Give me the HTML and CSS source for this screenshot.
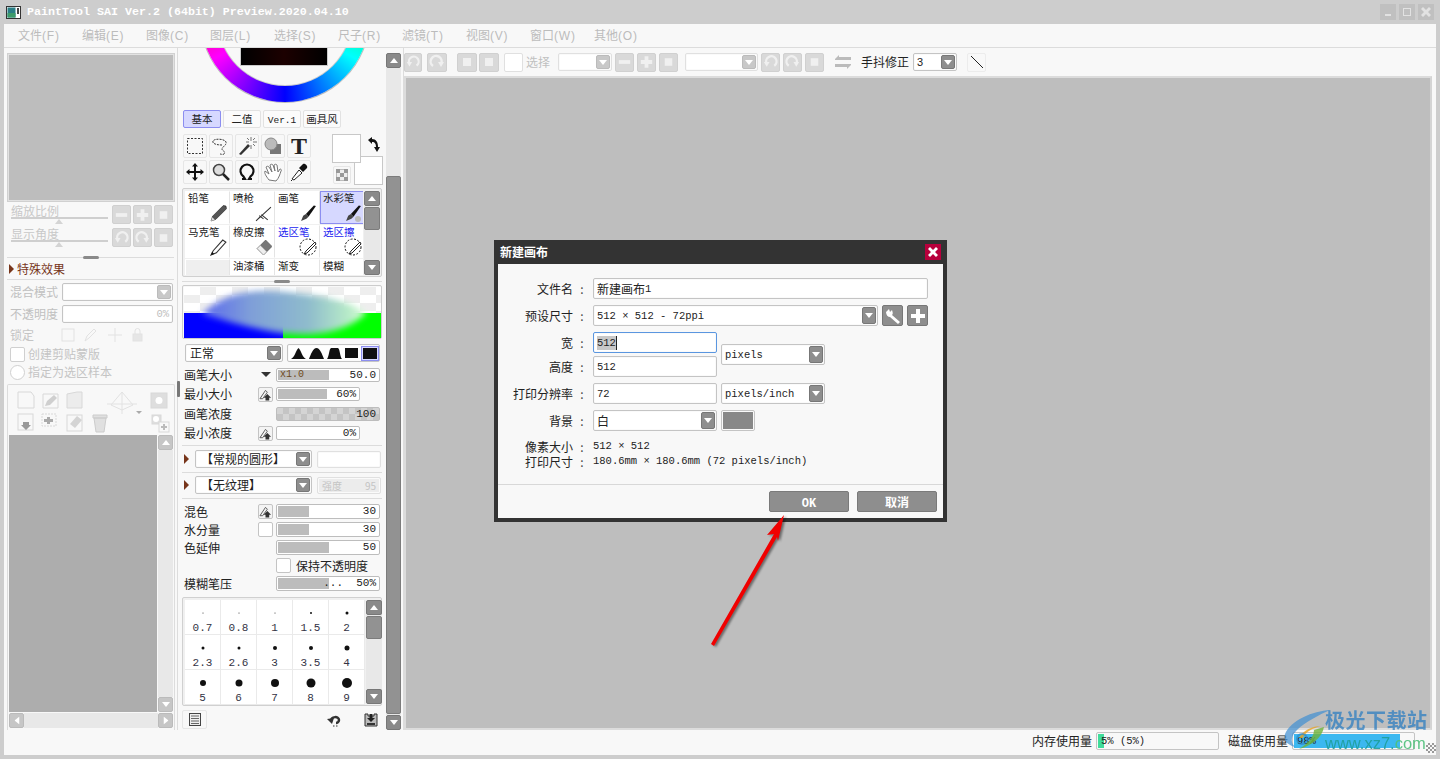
FILE: index.html
```html
<!DOCTYPE html>
<html lang="zh-CN">
<head>
    <meta charset="UTF-8">
    <title>PaintTool SAI Ver.2</title>
    <link rel="stylesheet" href="styles.css">
</head>
<body>
<svg class="defs" width="0" height="0">
    <symbol id="pen" viewBox="0 0 16 16"><path d="M15 1 L12.5 0.5 L2.5 10.5 L1 15 L5.5 13.5 L15.5 3.5 Z" fill="#555" stroke="#222" stroke-width=".6"/><path d="M1 15 L2.2 11.5 L4.5 13.8 Z" fill="#ddd"/></symbol>
    <symbol id="brush" viewBox="0 0 16 16"><path d="M15 1 L13 0.5 L5.5 8.5 L8 11 Z" fill="#111"/><path d="M5.5 8.5 L3 10 L1 15 L6 13 L8 11 Z" fill="#444"/></symbol>
    <symbol id="eraser" viewBox="0 0 16 16"><path d="M10 1 L16 7 L8 15 L2 9 Z" fill="#777" stroke="#555" stroke-width=".6"/><path d="M2 9 L5 6 L11 12 L8 15 Z" fill="#eee" stroke="#aaa" stroke-width=".6"/></symbol>
    <symbol id="sel" viewBox="0 0 18 18"><circle cx="9" cy="9" r="8" fill="#fff" stroke="#111" stroke-dasharray="2 1.5"/><path d="M16 4 L7 13 L5 16 L8 15 L17 6 Z" fill="#fff" stroke="#222"/></symbol>
    <symbol id="tri" viewBox="0 0 8 5"><path d="M0 5 L4 0 L8 5 Z" fill="#fff"/></symbol>
    <symbol id="pressure" viewBox="0 0 14 14"><path d="M1 11 L7 2 L9 4 L4 11 Z" fill="none" stroke="#555"/><path d="M7 13 V10 H5 L9 6 L13 10 H11 V13 Z" fill="#333"/></symbol>
    <symbol id="minus" viewBox="0 0 18 18"><rect x="3" y="7" width="12" height="4" fill="#f0f0f0"/></symbol>
    <symbol id="plus" viewBox="0 0 18 18"><path d="M7 3 H11 V7 H15 V11 H11 V15 H7 V11 H3 V7 H7 Z" fill="#f0f0f0"/></symbol>
    <symbol id="square" viewBox="0 0 18 18"><rect x="5" y="5" width="8" height="8" fill="#f0f0f0"/></symbol>
    <symbol id="turn" viewBox="0 0 18 18"><path d="M13 13 A5.5 5.5 0 1 0 5 11" fill="none" stroke="#f0f0f0" stroke-width="2.5"/><path d="M2 9 H8 L5 14 Z" fill="#f0f0f0"/></symbol>
    <symbol id="turn2" viewBox="0 0 18 18"><path d="M5 13 A5.5 5.5 0 1 1 13 11" fill="none" stroke="#f0f0f0" stroke-width="2.5"/><path d="M10 9 H16 L13 14 Z" fill="#f0f0f0"/></symbol>
    <symbol id="cross" viewBox="0 0 12 12"><path d="M1 3 L3 1 L6 4 L9 1 L11 3 L8 6 L11 9 L9 11 L6 8 L3 11 L1 9 L4 6 Z" fill="currentColor"/></symbol>
</svg>

<div class="titlebar">
    <svg class="app-icon" width="15" height="13" viewBox="0 0 15 13"><rect width="15" height="13" fill="#333"/><rect x="1" y="1" width="13" height="11" fill="#fff"/><rect x="1.500" y="1.500" width="8" height="10" fill="#2a7f86"/><rect x="1.500" y="7" width="8" height="4.500" fill="#3d9b6a"/><rect x="11" y="2" width="2" height="6" fill="#444"/></svg>
    <span class="title-text">PaintTool SAI Ver.2 (64bit) Preview.2020.04.10</span>
    <div class="win-btns">
        <div class="win-btn"><i class="w-min"></i></div>
        <div class="win-btn"><i class="w-max"></i></div>
        <div class="win-btn"><svg width="12" height="12"><use href="#cross"/></svg></div>
    </div>
</div>

<div class="menubar">
    <span class="menu-item">文件<b>(F)</b></span>
    <span class="menu-item">编辑<b>(E)</b></span>
    <span class="menu-item">图像<b>(C)</b></span>
    <span class="menu-item">图层<b>(L)</b></span>
    <span class="menu-item">选择<b>(S)</b></span>
    <span class="menu-item">尺子<b>(R)</b></span>
    <span class="menu-item">滤镜<b>(T)</b></span>
    <span class="menu-item">视图<b>(V)</b></span>
    <span class="menu-item">窗口<b>(W)</b></span>
    <span class="menu-item">其他<b>(O)</b></span>
</div>

<div class="main">
    <!-- left: navigator + layers -->
    <div class="left">
        <div class="navigator"></div>
        <div class="nav-row">
            <div class="nav-slider"><span>缩放比例</span><div class="track"><i></i></div></div>
            <div class="btn-grp">
                <div class="gbtn off"><svg width="18" height="18"><use href="#minus"/></svg></div>
                <div class="gbtn off"><svg width="18" height="18"><use href="#plus"/></svg></div>
                <div class="gbtn off"><svg width="18" height="18"><use href="#square"/></svg></div>
            </div>
        </div>
        <div class="nav-row row-2">
            <div class="nav-slider"><span>显示角度</span><div class="track"><i></i></div></div>
            <div class="btn-grp">
                <div class="gbtn off"><svg width="18" height="18"><use href="#turn"/></svg></div>
                <div class="gbtn off"><svg width="18" height="18"><use href="#turn2"/></svg></div>
                <div class="gbtn off"><svg width="18" height="18"><use href="#square"/></svg></div>
            </div>
        </div>
        <div class="grip-line"><i></i></div>
        <div class="fx-head"><i class="arrow"></i><span>特殊效果</span></div>
        <div class="field-row first">
            <label>混合模式</label>
            <div class="box sel off grow"><em class="drop off"><svg width="8" height="5"><use href="#tri"/></svg></em></div>
        </div>
        <div class="field-row">
            <label>不透明度</label>
            <div class="box grow num">0%</div>
        </div>
        <div class="lock-row">
            <label>锁定</label>
            <svg width="84" height="18" viewBox="0 0 84 18"><g fill="none" stroke="#e2e2e2"><rect x="2" y="3" width="12" height="12"/><path d="M25 15 L27 10 L34 3 L36 5 L29 12 Z"/><path d="M55 2 V16 M48 9 H62"/><rect x="73" y="8" width="9" height="7" fill="#e6e6e6"/><path d="M75 8 V5 A2.500 2.500 0 0 1 80 5 V8"/></g></svg>
        </div>
        <div class="check-row"><i class="check"></i><span>创建剪贴蒙版</span></div>
        <div class="check-row"><i class="check round"></i><span>指定为选区样本</span></div>
        <div class="layers">
            <div class="layer-icons">
                <svg width="166" height="42" viewBox="0 0 166 42">
                    <g fill="#f8f8f8" stroke="#d8d8d8">
                        <path d="M9 1 H22 L25 5 V17 H9 Z"/>
                        <path d="M34 3 H49 V17 H34 Z"/>
                        <path d="M58 3 L68 1 H73 V17 H58 Z" fill="#ececec"/>
                        <rect x="142" y="2" width="16" height="15" fill="#dedede"/>
                        <rect x="9" y="23" width="15" height="16"/>
                        <rect x="33" y="23" width="14" height="12" stroke-dasharray="2 1"/>
                        <rect x="58" y="24" width="15" height="16"/>
                        <rect x="143" y="24" width="9" height="9" fill="#dedede"/>
                        <rect x="150" y="31" width="10" height="10"/>
                    </g>
                    <circle cx="150" cy="9.500" r="3.500" fill="#fff"/>
                    <path d="M36 15 L38 10 L45 4 L48 7 L41 14 Z" fill="#cfcfcf"/>
                    <path d="M113 1 L124 14 L113 19 L102 14 Z M113 1 V23 M98 13 H128" fill="none" stroke="#e2e2e2"/>
                    <path d="M127 20 H133 L130 23 Z" fill="#aaa"/>
                    <path d="M14 31 V34 H12 L17 39 L22 34 H20 V31 Z" fill="#999"/>
                    <path d="M38 26 H41 V28 H44 V31 H41 V33 H38 V31 H35 V28 H38 Z" fill="#aaa"/>
                    <path d="M61 33 L68 25 L73 29 L66 37 Z" fill="#d4d4d4"/>
                    <path d="M84 24 H98 V27 H84 Z M85 27 L87 41 H95 L97 27 Z" fill="#e0e0e0" stroke="#ccc"/>
                    <path d="M154 33 H156 V35 H158 V37 H156 V39 H154 V37 H152 V35 H154 Z" fill="#bbb"/>
                    <circle cx="147" cy="28" r="3" fill="#fff"/>
                </svg>
            </div>
            <div class="layer-list">
                <div class="layer-fill"></div>
                <div class="sb thin">
                    <div class="sb-btn off"><svg width="8" height="5"><use href="#tri"/></svg></div>
                    <div class="sb-track"></div>
                    <div class="sb-btn off down"><svg width="8" height="5"><use href="#tri"/></svg></div>
                </div>
            </div>
            <div class="hscroll">
                <div class="sb-btn off left-b"><svg width="8" height="5"><use href="#tri"/></svg></div>
                <div class="h-track"></div>
                <div class="sb-btn off right-b"><svg width="8" height="5"><use href="#tri"/></svg></div>
            </div>
        </div>
        <i class="side-handle"></i>
    </div>

    <!-- middle: color + brush tools -->
    <div class="mid">
        <div class="wheel-clip">
            <div class="wheel"></div>
            <div class="wheel-inner"></div>
            <div class="wheel-sq"></div>
        </div>
        <div class="tabs">
            <span class="tab on">基本</span>
            <span class="tab">二值</span>
            <span class="tab"><b>Ver.1</b></span>
            <span class="tab">画具风</span>
        </div>
        <div class="tool-area">
            <div class="tools">
                <div class="tool"><svg width="20" height="20"><rect x="2.500" y="2.500" width="15" height="15" fill="none" stroke="#333" stroke-dasharray="2 1.500"/></svg></div>
                <div class="tool"><svg width="20" height="20"><path d="M11 9 C4 9 1 7 2 5 C4 2 14 3 15 6 C16 9 11 11 11 13 C11 15 15 15 13 18 C12 19 10 18 9 18" fill="none" stroke="#333" stroke-dasharray="2 1"/></svg></div>
                <div class="tool"><svg width="20" height="20"><path d="M2 18 L11 8 L13 10 L4 19 Z" fill="#333"/><path d="M14 1 V5 M14 9 V13 M9 6 H12 M16 6 H20 M10 2 L12 4 M18 2 L16 4 M18 10 L16 8" stroke="#777"/></svg></div>
                <div class="tool"><svg width="20" height="20"><rect x="7" y="8" width="11" height="10" fill="#777"/><circle cx="8" cy="8" r="6" fill="#bbb" stroke="#888"/></svg></div>
                <div class="tool t-letter">T</div>
                <div class="tool"><svg width="20" height="20"><path d="M10 1 L13 4.500 H11 V9 H15.500 V7 L19 10 L15.500 13 V11 H11 V15.500 H13 L10 19 L7 15.500 H9 V11 H4.500 V13 L1 10 L4.500 7 V9 H9 V4.500 H7 Z" fill="#111"/></svg></div>
                <div class="tool"><svg width="20" height="20"><circle cx="8" cy="8" r="5.500" fill="#ddd" stroke="#444" stroke-width="1.500"/><path d="M12 12 L18 18" stroke="#222" stroke-width="2.500"/></svg></div>
                <div class="tool"><svg width="20" height="20"><path d="M5 17 H8 L6.500 14.500 A6.500 6.500 0 1 1 13.500 14.500 L12 17 H15" fill="none" stroke="#111" stroke-width="2.200"/></svg></div>
                <div class="tool"><svg width="20" height="20"><path d="M6 18 C3 14 1 11 2 9 L6 12 L3 5 C4 4 5 4 6 5 L9 10 L7 3 C8 2 9 2 10 3 L12 9 L11 3 C12 2 13 2 14 3 L15 10 L17 7 C18 7 19 8 18 9 C17 12 16 16 13 19 Z" fill="#fff" stroke="#777"/></svg></div>
                <div class="tool"><svg width="20" height="20"><path d="M3 18 L2 19 M3 17 L10 8 L13 11 L5 18 Z" fill="#fff" stroke="#222"/><path d="M10 6 L14 2 C16 1 19 4 18 6 L14 10 Z" fill="#111"/></svg></div>
            </div>
            <div class="swatches">
                <div class="swatch fg"></div>
                <div class="swatch bg"></div>
                <svg class="swap" width="14" height="16" viewBox="0 0 14 16"><path d="M1 3 L5 0 V2 C9 2 11 5 11 10 H13 L10 15 L7 10 H9 C9 7 8 5 5 5 V7 Z" fill="#111"/></svg>
                <div class="sw-reset"><svg width="12" height="12"><rect width="12" height="12" fill="#eee" stroke="#888"/><path d="M0 0 H4 V4 H0 Z M8 0 H12 V4 H8 Z M4 4 H8 V8 H4 Z M0 8 H4 V12 H0 Z M8 8 H12 V12 H8 Z" fill="#999"/></svg></div>
            </div>
        </div>
        <div class="brush-box">
            <div class="brush-grid">
                <div class="bcell">铅笔<svg class="bi" width="17" height="17"><use href="#pen"/></svg></div>
                <div class="bcell">喷枪<svg class="bi" width="17" height="17" viewBox="0 0 16 16"><path d="M1 15 L5 11 M4 10 L8 13 M3 13 L15 2 M6 9 L12 14" stroke="#333" fill="none"/></svg></div>
                <div class="bcell">画笔<svg class="bi" width="17" height="17"><use href="#brush"/></svg></div>
                <div class="bcell on">水彩笔<svg class="bi" width="17" height="17"><use href="#brush"/></svg><i class="drip"></i></div>
                <div class="bcell">马克笔<svg class="bi" width="17" height="17" viewBox="0 0 16 16"><path d="M15 3 L12 1 L3 11 L1 15 L6 13 Z" fill="#fff" stroke="#333"/><path d="M1 15 L2 12 L4 14 Z" fill="#111"/></svg></div>
                <div class="bcell">橡皮擦<svg class="bi" width="17" height="17"><use href="#eraser"/></svg></div>
                <div class="bcell blue">选区笔<svg class="bi" width="18" height="18"><use href="#sel"/></svg></div>
                <div class="bcell blue">选区擦<svg class="bi" width="18" height="18"><use href="#sel"/></svg></div>
                <div class="bcell empty"></div>
                <div class="bcell short">油漆桶</div>
                <div class="bcell short">渐变</div>
                <div class="bcell short">模糊</div>
            </div>
            <div class="sb thin2">
                <div class="sb-btn"><svg width="8" height="5"><use href="#tri"/></svg></div>
                <div class="sb-track"><div class="sb-thumb t-small"></div></div>
                <div class="sb-btn down"><svg width="8" height="5"><use href="#tri"/></svg></div>
            </div>
        </div>
        <div class="grip-line mid-grip"><i></i></div>
        <div class="stroke-preview">
            <svg width="197" height="51" viewBox="0 0 197 51">
                <defs>
                    <pattern id="chk" width="32" height="16" patternUnits="userSpaceOnUse"><rect width="32" height="16" fill="#fff"/><rect x="16" width="16" height="8" fill="#eee"/><rect y="8" width="16" height="8" fill="#eee"/></pattern>
                    <linearGradient id="blob" x1="0" x2="1"><stop offset="0" stop-color="#5a68ee"/><stop offset=".3" stop-color="#7f9fd8"/><stop offset=".65" stop-color="#8fbccc"/><stop offset=".9" stop-color="#b8ecc8"/><stop offset="1" stop-color="#e0ffe0"/></linearGradient>
                    <filter id="soft" x="-10%" y="-10%" width="120%" height="120%"><feGaussianBlur stdDeviation="3"/></filter>
                </defs>
                <rect width="197" height="26" fill="url(#chk)"/>
                <rect y="26" width="99" height="25" fill="#0000ff"/>
                <rect x="99" y="26" width="98" height="25" fill="#00ff00"/>
                <path d="M18 27 C38 8 60 3 88 4 C120 6 145 10 165 17 C175 21 180 24 182 26 C170 38 150 47 120 47 C85 47 50 36 18 27 Z" fill="url(#blob)" filter="url(#soft)"/>
            </svg>
        </div>
        <div class="blend-row">
            <div class="box sel blend">正常<em class="drop"><svg width="8" height="5"><use href="#tri"/></svg></em></div>
            <div class="box shapes">
                <svg width="15" height="11" viewBox="0 0 15 11"><path d="M0 11 C4 9 5 2 7.500 0 C10 2 11 9 15 11 Z" fill="#111"/></svg>
                <svg width="15" height="11" viewBox="0 0 15 11"><path d="M0 11 C2 6 4 0 7.500 0 C11 0 13 6 15 11 Z" fill="#111"/></svg>
                <svg width="15" height="11" viewBox="0 0 15 11"><path d="M0 11 C2 9 2 1 4 0 H11 C13 1 13 9 15 11 Z" fill="#111"/></svg>
                <svg width="13" height="10" viewBox="0 0 13 10"><rect width="13" height="10" fill="#111"/></svg>
                <span class="shape-on"><i></i></span>
            </div>
        </div>
        <div class="sliders">
            <div class="s-row">
                <label>画笔大小</label><i class="down-tri"></i>
                <div class="slider wide"><i class="fill f-size"></i><u>x1.0</u><b>50.0</b></div>
            </div>
            <div class="s-row">
                <label>最小大小</label><div class="tick press"><svg width="14" height="14"><use href="#pressure"/></svg></div>
                <div class="slider narrow"><i class="fill" style="width:60%"></i><b>60%</b></div>
            </div>
            <div class="s-row gap-top">
                <label>画笔浓度</label>
                <div class="slider wide checker"><b>100</b></div>
            </div>
            <div class="s-row">
                <label>最小浓度</label><div class="tick press"><svg width="14" height="14"><use href="#pressure"/></svg></div>
                <div class="slider narrow"><b>0%</b></div>
            </div>
        </div>
        <div class="hr hr-a"></div>
        <div class="tex-row">
            <i class="arrow"></i>
            <div class="box sel tex">【常规的圆形】<em class="drop"><svg width="8" height="5"><use href="#tri"/></svg></em></div>
            <div class="box tex-side"></div>
        </div>
        <div class="hr hr-b"></div>
        <div class="tex-row">
            <i class="arrow"></i>
            <div class="box sel tex">【无纹理】<em class="drop"><svg width="8" height="5"><use href="#tri"/></svg></em></div>
            <div class="box tex-side strength"><span>强度</span><span>95</span></div>
        </div>
        <div class="hr hr-c"></div>
        <div class="sliders tight">
            <div class="s-row">
                <label>混色</label><div class="tick press"><svg width="14" height="14"><use href="#pressure"/></svg></div>
                <div class="slider wide"><i class="fill" style="width:30%"></i><b>30</b></div>
            </div>
            <div class="s-row">
                <label>水分量</label><div class="tick"></div>
                <div class="slider wide"><i class="fill" style="width:30%"></i><b>30</b></div>
            </div>
            <div class="s-row">
                <label>色延伸</label>
                <div class="slider wide"><i class="fill" style="width:50%"></i><b>50</b></div>
            </div>
            <div class="s-row keep">
                <div class="tick"></div><span>保持不透明度</span>
            </div>
            <div class="s-row">
                <label>模糊笔压</label>
                <div class="slider wide"><i class="fill" style="width:50%"></i><b>...&nbsp; 50%</b></div>
            </div>
        </div>
        <div class="size-box">
            <div class="size-grid">
                <div class="sz"><i style="width:1px;height:1px"></i><span>0.7</span></div>
                <div class="sz"><i style="width:1px;height:1px"></i><span>0.8</span></div>
                <div class="sz"><i style="width:1px;height:1px"></i><span>1</span></div>
                <div class="sz"><i style="width:2px;height:2px"></i><span>1.5</span></div>
                <div class="sz"><i style="width:3px;height:3px"></i><span>2</span></div>
                <div class="sz"><i style="width:3px;height:3px"></i><span>2.3</span></div>
                <div class="sz"><i style="width:3px;height:3px"></i><span>2.6</span></div>
                <div class="sz"><i style="width:4px;height:4px"></i><span>3</span></div>
                <div class="sz"><i style="width:4px;height:4px"></i><span>3.5</span></div>
                <div class="sz"><i style="width:5px;height:5px"></i><span>4</span></div>
                <div class="sz"><i style="width:6px;height:6px"></i><span>5</span></div>
                <div class="sz"><i style="width:7px;height:7px"></i><span>6</span></div>
                <div class="sz"><i style="width:8px;height:8px"></i><span>7</span></div>
                <div class="sz"><i style="width:9px;height:9px"></i><span>8</span></div>
                <div class="sz"><i style="width:10px;height:10px"></i><span>9</span></div>
            </div>
            <div class="sb thin2">
                <div class="sb-btn"><svg width="8" height="5"><use href="#tri"/></svg></div>
                <div class="sb-track"><div class="sb-thumb t-small"></div></div>
                <div class="sb-btn down"><svg width="8" height="5"><use href="#tri"/></svg></div>
            </div>
        </div>
        <div class="mid-foot">
            <div class="foot-btn"><svg width="12" height="13" viewBox="0 0 12 13"><rect x=".5" y=".5" width="11" height="12" fill="#eee" stroke="#444"/><path d="M2 3 H10 M2 5.500 H10 M2 8 H10 M2 10.500 H10" stroke="#666"/></svg></div>
            <svg class="foot-undo" width="14" height="14" viewBox="0 0 14 14"><path d="M4 8 C4 3 12 3 12 7 C12 9 10 10 9 10" fill="none" stroke="#333" stroke-width="2.500"/><path d="M0 6 L7 5 L5 11 Z" fill="#333"/><path d="M6 13 H7.500 M9 13 H10.500" stroke="#333"/></svg>
            <svg class="foot-save" width="14" height="14" viewBox="0 0 14 14"><path d="M1 1 H4 V3 H10 V1 H13 V13 H1 Z" fill="#bbb" stroke="#333"/><path d="M5.500 1 H8.500 V5 H11 L7 9 L3 5 H5.500 Z" fill="#222"/><rect x="3" y="10" width="8" height="2" fill="#333"/></svg>
        </div>
    </div>

    <div class="sb main-sb">
        <div class="sb-btn"><svg width="8" height="5"><use href="#tri"/></svg></div>
        <div class="sb-track"><div class="sb-thumb t-main"></div></div>
        <div class="sb-btn down"><svg width="8" height="5"><use href="#tri"/></svg></div>
    </div>

    <!-- canvas area -->
    <div class="work">
        <div class="toolbar">
            <div class="gbtn off w18"><svg width="16" height="18"><use href="#turn"/></svg></div>
            <div class="gbtn off w20 ml5"><svg width="18" height="18"><use href="#turn2"/></svg></div>
            <div class="gbtn off w20 ml10"><svg width="18" height="18"><use href="#square"/></svg></div>
            <div class="gbtn off w20 ml2"><svg width="18" height="18"><use href="#square"/></svg></div>
            <div class="tb-check ml5"></div>
            <span class="tb-label off-text">选择</span>
            <div class="box sel off tb-sel s54 ml8"><em class="drop off"><svg width="8" height="5"><use href="#tri"/></svg></em></div>
            <div class="gbtn off ml3"><svg width="18" height="18"><use href="#minus"/></svg></div>
            <div class="gbtn off ml3"><svg width="18" height="18"><use href="#plus"/></svg></div>
            <div class="gbtn off ml3"><svg width="18" height="18"><use href="#square"/></svg></div>
            <div class="box sel off tb-sel s73 ml7"><em class="drop off"><svg width="8" height="5"><use href="#tri"/></svg></em></div>
            <div class="gbtn off ml3"><svg width="18" height="18"><use href="#turn"/></svg></div>
            <div class="gbtn off ml3"><svg width="18" height="18"><use href="#turn2"/></svg></div>
            <div class="gbtn off ml3"><svg width="18" height="18"><use href="#square"/></svg></div>
            <svg class="ml10" width="18" height="16" viewBox="0 0 18 16"><path d="M1 5 L5 1 V3 H17 V6 H1 Z M17 11 L13 15 V13 H1 V10 H17 Z" fill="#bbb"/></svg>
            <span class="tb-label on-text">手抖修正</span>
            <div class="box sel tb-sel s44 ml4"><span class="val">3</span><em class="drop"><svg width="8" height="5"><use href="#tri"/></svg></em></div>
            <div class="slash ml10"><svg width="14" height="14"><path d="M1 1 L13 13" stroke="#222"/></svg></div>
        </div>
        <div class="canvas"></div>
    </div>
</div>

<div class="statusbar">
    <span class="st-label">内存使用量</span>
    <div class="meter"><i class="mem"></i><span>5% (5%)</span></div>
    <span class="st-label second">磁盘使用量</span>
    <div class="meter"><i class="disk"></i><span>98%</span></div>
    <i class="resize"></i>
</div>

<!-- new canvas dialog -->
<div class="dialog">
    <div class="dlg-title">
        <span>新建画布</span>
        <div class="dlg-close"><svg width="12" height="12"><use href="#cross"/></svg></div>
    </div>
    <div class="dlg-body">
        <div class="d-row">
            <label>文件名</label><u>:</u>
            <div class="box d-input full">新建画布<b>1</b></div>
        </div>
        <div class="d-row">
            <label>预设尺寸</label><u>:</u>
            <div class="box sel d-input preset"><b>512 × 512 - 72ppi</b><em class="drop"><svg width="8" height="5"><use href="#tri"/></svg></em></div>
            <div class="d-tool"><svg width="18" height="18" viewBox="0 0 18 18"><path d="M2 5 L5 2 L6 5 L8 3 C9 6 9 7 8 8 L16 15 L14 17 L6 10 C4 10 2 8 2 5 Z" fill="#fff"/></svg></div>
            <div class="d-tool"><svg width="18" height="18"><path d="M7 2 H11 V7 H16 V11 H11 V16 H7 V11 H2 V7 H7 Z" fill="#fff"/></svg></div>
        </div>
        <div class="d-pair">
            <div class="d-col">
                <div class="d-row">
                    <label>宽</label><u>:</u>
                    <div class="box d-input w124 focus"><b class="selected">512</b></div>
                </div>
                <div class="d-row">
                    <label>高度</label><u>:</u>
                    <div class="box d-input w124"><b>512</b></div>
                </div>
            </div>
            <div class="box sel d-input unit"><b>pixels</b><em class="drop"><svg width="8" height="5"><use href="#tri"/></svg></em></div>
        </div>
        <div class="d-row">
            <label>打印分辨率</label><u>:</u>
            <div class="box d-input w124"><b>72</b></div>
            <div class="box sel d-input unit"><b>pixels/inch</b><em class="drop"><svg width="8" height="5"><use href="#tri"/></svg></em></div>
        </div>
        <div class="d-row">
            <label>背景</label><u>:</u>
            <div class="box sel d-input w124">白<em class="drop"><svg width="8" height="5"><use href="#tri"/></svg></em></div>
            <div class="box d-color"><i></i></div>
        </div>
        <div class="d-info">
            <div><label>像素大小</label><u>:</u><b>512 × 512</b></div>
            <div><label>打印尺寸</label><u>:</u><b>180.6mm × 180.6mm (72 pixels/inch)</b></div>
        </div>
        <div class="d-foot">
            <div class="d-btn"><b>OK</b></div>
            <div class="d-btn">取消</div>
        </div>
    </div>
</div>

<!-- red annotation arrow -->
<svg class="anno" width="90" height="140" viewBox="0 0 90 140">
    <path d="M78 5 L61 25 L68 24 L5 134 L8 136 L71 27 L72 31 Z" fill="#f00000"/>
</svg>

<!-- watermark -->
<div class="wm">
    <svg width="60" height="48" viewBox="0 0 60 48">
        <path d="M47 2 C30 3 8 12 2 26 C0 33 5 37 12 39 C7 34 8 28 14 22 C22 14 36 7 47 2 Z" fill="#3f8fd2" opacity=".7"/>
        <path d="M41 19 C39 30 28 38 16 41 C26 35 31 28 31 22 Z" fill="#6fb33a" opacity=".8"/>
        <path d="M16 30 C20 22 30 18 38 18 C30 20 22 24 20 30 Z" fill="#e9a21f" opacity=".8"/>
        <circle cx="19" cy="31" r="5" fill="none" stroke="#2f86c8" stroke-width="2" opacity=".7"/>
    </svg>
    <div class="wm-text">
        <div class="wm-cn">极光下载站</div>
        <div class="wm-en">www.xz7.<span>com</span></div>
    </div>
</div>
</body>
</html>
```

FILE: styles.css
```css
* { box-sizing: border-box; }
html, body { margin: 0; padding: 0; }
body {
    position: relative;
    width: 1440px;
    height: 759px;
    overflow: hidden;
    background: #cdcdcd;
    font-family: "Noto Sans CJK SC", "Liberation Sans", sans-serif;
    font-size: 12px;
    line-height: 14px;
    color: #222;
}
i, em, u, b { font-style: normal; text-decoration: none; font-weight: normal; }
label { display: block; }
.defs { position: absolute; }

/* title + menu */
.titlebar { height: 24px; display: flex; align-items: center; padding-left: 6px; }
.app-icon { margin-right: 6px; }
.title-text { font-family: "Liberation Mono", monospace; font-weight: bold; font-size: 11.67px; color: #fff; }
.win-btns { margin-left: auto; margin-right: 6px; display: flex; gap: 3px; }
.win-btn { width: 16px; height: 16px; background: #c0c0c0; color: #e2e2e2; display: flex; align-items: center; justify-content: center; }
.win-btn i { display: block; }
.w-min { width: 6px; height: 2px; background: #e2e2e2; margin-top: 6px; }
.w-max { width: 8px; height: 8px; border: 1px solid #e2e2e2; }
.menubar { height: 24px; margin: 0 4px; background: #f8f8f8; border-bottom: 1px solid #dcdcdc; display: flex; padding-left: 14px; align-items: center; }
.menu-item { width: 64px; color: #bcbcbc; }
.menu-item b { font-family: "Liberation Sans", sans-serif; letter-spacing: .8px; }

.main { height: 682px; margin: 0 4px; background: #f8f8f8; display: flex; }

/* generic */
.box { background: #fff; border: 1px solid #c4c4c4; border-radius: 2px; box-shadow: inset 0 0 0 1px #fafafa; }
.sel { position: relative; display: flex; align-items: center; }
.drop { position: absolute; right: 1px; top: 1px; bottom: 1px; width: 14px; background: #8e8e8e; border: 1px solid #777; border-radius: 2px; display: flex; align-items: center; justify-content: center; }
.drop svg { transform: rotate(180deg); }
.drop.off { background: #c8c8c8; border-color: #bbb; }
.grow { flex: 1; height: 100%; }
.gbtn { width: 19px; height: 19px; border-radius: 2px; background: #8e8e8e; display: flex; align-items: center; justify-content: center; }
.gbtn.off { background: #d9d9d9; border: 1px solid #d0d0d0; }
.hr { height: 1px; background: #dcdcdc; }

/* scrollbars */
.sb { width: 15px; display: flex; flex-direction: column; }
.sb-btn { height: 15px; width: 100%; flex: none; background: #8a8a8a; border: 1px solid #777; border-radius: 2px; display: flex; align-items: center; justify-content: center; }
.sb-btn.off { background: #c6c6c6; border-color: #bbb; }
.sb-btn.down svg { transform: rotate(180deg); }
.sb-track { flex: 1; background: #e8e8e8; min-height: 0; }
.sb-thumb { background: #929292; border: 1px solid #7c7c7c; border-radius: 2px; }
.t-small { height: 23px; margin-top: 1px; }

/* left panel */
.left { width: 174px; flex: none; position: relative; padding: 5px 3px 0 3px; border-right: 1px solid #dcdcdc; }
.navigator { height: 149px; width: 168px; background: #bdbdbd; border: 2px solid #e2e2e2; outline: 1px solid #d0d0d0; outline-offset: -1px; }
.nav-row { display: flex; height: 19px; margin-top: 3px; padding-left: 4px; justify-content: space-between; }
.row-2 { margin-top: 4px; }
.nav-slider { width: 97px; color: #c8c8c8; font-size: 12px; position: relative; }
.nav-slider span { display: block; height: 12px; line-height: 12px; }
.track { height: 2px; background: #cfcfcf; position: relative; }
.track i { position: absolute; left: 44px; top: 2px; width: 0; height: 0; border: 4px solid transparent; border-top: 0; border-bottom: 5px solid #d4d4d4; }
.btn-grp { display: flex; gap: 2px; padding-right: 1px; }
.grip-line { height: 1px; background: #dcdcdc; margin-top: 10px; position: relative; }
.grip-line i { position: absolute; left: 76px; top: -1px; width: 16px; height: 3px; background: #8a8a8a; border-radius: 2px; }
.fx-head { height: 22px; display: flex; align-items: center; padding-left: 2px; color: #77351a; font-size: 12px; border-bottom: 1px solid #dcdcdc; }
.arrow { display: block; width: 0; height: 0; border: 5px solid transparent; border-left: 5px solid #77351a; border-right: 0; margin-right: 3px; }
.field-row { display: flex; align-items: center; height: 18px; margin-top: 4px; padding-left: 3px; color: #c0c0c0; padding-right: 1px; }
.field-row.first { margin-top: 3px; }
.field-row label { width: 52px; }
.num { text-align: right; padding-right: 3px; color: #c0c0c0; font-family: "Liberation Mono", monospace; font-size: 10.500px; line-height: 16px; }
.lock-row { display: flex; height: 21px; align-items: center; margin-top: 1px; padding-left: 3px; color: #c4c4c4; }
.lock-row label { width: 50px; }
.check-row { height: 18px; display: flex; align-items: center; padding-left: 3px; color: #c4c4c4; }
.check { display: block; width: 15px; height: 15px; background: #fff; border: 1px solid #d0d0d0; border-radius: 2px; margin-right: 3px; }
.check.round { border-radius: 50%; }
.layers { position: absolute; left: 3px; top: 336px; width: 168px; height: 346px; border: 1px solid #dcdcdc; border-bottom: 0; border-radius: 2px 2px 0 0; padding: 6px 1px 0; }
.layer-icons { height: 44px; }
.layer-list { height: 277px; display: flex; gap: 1px; }
.layer-fill { flex: 1; background: #adadad; }
.thin { width: 15px; }
.hscroll { display: flex; height: 15px; margin-top: 1px; }
.hscroll .sb-btn { width: 15px; }
.left-b svg { transform: rotate(-90deg); }
.right-b svg { transform: rotate(90deg); }
.h-track { flex: 1; background: #e8e8e8; }
.side-handle { position: absolute; right: -3px; top: 333px; width: 3px; height: 16px; background: #777; border-radius: 1px; z-index: 2; }

/* middle panel */
.mid { width: 204px; flex: none; padding: 0 0 0 4px; }
.wheel-clip { height: 55px; position: relative; overflow: hidden; margin-left: -4px; }
.wheel, .wheel-inner { position: absolute; border-radius: 50%; }
.wheel { left: 23px; top: -114px; width: 168px; height: 168px; background: conic-gradient(yellow, lime 60deg, cyan 120deg, blue 180deg, magenta 240deg, red 300deg, yellow); box-shadow: 0 0 0 1px #bbb; }
.wheel-inner { left: 40px; top: -97px; width: 134px; height: 134px; background: #f8f8f8; box-shadow: 0 0 0 1px #ccc; }
.wheel-sq { position: absolute; left: 62px; top: -4px; width: 88px; height: 22px; background: linear-gradient(90deg, #000, #1c0000 50%, #000); border: 1px solid #ccc; }
.tabs { display: flex; gap: 2px; margin-top: 7px; padding-left: 1px; }
.tab { width: 38px; height: 18px; border: 1px solid #e2e2e2; border-radius: 2px; background: #fbfbfb; text-align: center; line-height: 16px; font-size: 10.500px; }
.tab b { font-family: "Liberation Mono", monospace; font-size: 9.500px; }
.tab.on { background: #d6d8ff; border-color: #8c8ef0; }
.tool-area { display: flex; margin-top: 6px; height: 52px; padding-left: 1px; }
.tools { width: 130px; display: grid; grid-template-columns: repeat(5, 24px); grid-auto-rows: 24px; gap: 2px; }
.tool { border: 1px solid #e6e6e6; border-radius: 2px; background: #f8f8f8; display: flex; align-items: center; justify-content: center; }
.t-letter { font-family: "Liberation Serif", serif; font-size: 24px; font-weight: bold; line-height: 22px; color: #222; }
.swatches { position: relative; flex: 1; margin-left: 19px; }
.swatch { position: absolute; width: 29px; height: 29px; background: #fff; border: 1px solid #c8c8c8; }
.fg { left: 0; top: 0; z-index: 1; }
.bg { left: 22px; top: 22px; }
.swap { position: absolute; left: 35px; top: 3px; }
.sw-reset { position: absolute; left: 1px; top: 32px; width: 18px; height: 18px; border: 1px solid #e6e6e6; border-radius: 2px; display: flex; align-items: center; justify-content: center; }
.brush-box { display: flex; height: 89px; margin-top: 2px; border: 1px solid #d0d0d0; border-radius: 2px; padding: 2px 1px 1px 2px; gap: 1px; width: 200px; background: #f0f0f0; }
.brush-grid { display: grid; grid-template-columns: repeat(4, 45px); grid-template-rows: 33px 33px 17px; gap: 1px 0; width: 180px; overflow: hidden; }
.bcell { position: relative; background: #fff; border: 1px solid #fff; border-right-color: #e4e4e4; padding: 0 2px; font-size: 10.500px; line-height: 12px; color: #222; }
.bcell.on { background: #d6d8ff; border-color: #8c8ef0; }
.bcell.blue { color: #1c1cf0; }
.bcell.empty { background: #efefef; }
.bi { position: absolute; right: 2px; bottom: 1px; }
.drip { position: absolute; right: 3px; bottom: 1px; width: 6px; height: 6px; border-radius: 50%; background: #bbb; }
.thin2 { width: 16px; flex: none; }
.mid-grip { margin: 4px 0 3px; }
.mid-grip i { left: 92px; }
.stroke-preview { width: 200px; height: 54px; border: 1px solid #ccc; padding: 1px; border-radius: 2px; }
.stroke-preview svg { display: block; }
.blend-row { display: flex; margin-top: 5px; height: 18px; padding-left: 3px; }
.blend { width: 98px; padding-left: 4px; font-size: 12px; }
.shapes { margin-left: 4px; width: 93px; display: flex; align-items: center; gap: 3px; padding-left: 3px; }
.shape-on { width: 18px; height: 15px; border: 1px solid #8c8ef0; background: #d6d8ff; display: flex; align-items: center; justify-content: center; }
.shape-on i { display: block; width: 14px; height: 11px; background: #111; }
.sliders { margin-top: 6px; display: flex; flex-direction: column; gap: 5px; }
.sliders.tight { margin-top: 5px; gap: 3px; }
.s-row { position: relative; height: 14px; padding-left: 2px; display: flex; align-items: center; }
.tight .s-row { height: 15px; }
.s-row label { width: 72px; flex: none; }
.gap-top { margin-top: 1px; }
.slider { position: absolute; left: 94px; top: 0; bottom: 0; border: 1px solid #bdbdbd; border-radius: 2px; background: #fff; overflow: hidden; }
.slider.wide { width: 104px; }
.slider.narrow { width: 84px; }
.slider .fill { position: absolute; left: 1px; top: 1px; bottom: 1px; background: #bcbcbc; }
.f-size { width: 50%; }
.slider b { position: absolute; right: 3px; top: 0; line-height: 12px; font-family: "Liberation Mono", monospace; font-size: 11px; color: #222; }
.tight .slider b { line-height: 13px; }
.slider u { position: absolute; left: 3px; top: 0; line-height: 12px; font-family: "Liberation Mono", monospace; font-size: 10px; color: #6e4a20; }
.checker { background: repeating-conic-gradient(#c4c4c4 0 25%, #d4d4d4 0 50%) 0 0 / 12px 12px; }
.tick { position: absolute; left: 76px; top: 0; width: 15px; height: 15px; background: #fff; border: 1px solid #c4c4c4; border-radius: 2px; display: flex; align-items: center; justify-content: center; }
.press { background: #f4f4f4; }
.tick svg { display: block; }
.down-tri { position: absolute; left: 79px; top: 4px; width: 0; height: 0; border: 5px solid transparent; border-top: 5px solid #333; border-bottom: 0; }
.keep .tick { left: 94px; }
.keep span { margin-left: 112px; white-space: nowrap; }
.hr-a { margin-top: 5px; width: 200px; }
.hr-b { margin-top: 4px; width: 200px; }
.hr-c { margin-top: 4px; width: 200px; }
.tex-row { display: flex; align-items: center; margin-top: 4px; height: 18px; padding-left: 2px; }
.hr-b + .tex-row { margin-top: 3px; }
.tex-row .arrow { margin-right: 6px; }
.tex { width: 117px; height: 18px; padding-left: 5px; white-space: nowrap; }
.tex-side { width: 64px; height: 17px; margin-left: 5px; border-color: #e0e0e0; }
.strength { display: flex; justify-content: space-between; padding: 0 4px; color: #c4c4c4; background: #ececec; font-size: 10px; line-height: 15px; }
.size-box { display: flex; width: 200px; height: 109px; margin-top: 6px; border: 1px solid #d0d0d0; border-radius: 2px; padding: 2px 1px 1px 2px; gap: 1px; background: #f0f0f0; }
.size-grid { width: 180px; display: grid; grid-template-columns: repeat(5, 36px); grid-auto-rows: 35px; }
.sz { position: relative; background: #fff; border: 1px solid #eaeaea; border-width: 0 1px 1px 0; }
.sz i { position: absolute; left: 18px; top: 13px; transform: translate(-50%, -50%); background: #111; border-radius: 50%; }
.sz span { position: absolute; left: 0; right: 0; top: 22px; text-align: center; font-family: "Liberation Mono", monospace; font-size: 11px; line-height: 12px; color: #334; }
.mid-foot { height: 24px; display: flex; align-items: center; position: relative; }
.foot-btn { width: 25px; height: 19px; border: 1px solid #e6e6e6; border-radius: 2px; display: flex; align-items: center; justify-content: center; margin-top: 3px; }
.foot-undo { position: absolute; left: 145px; top: 7px; }
.foot-save { position: absolute; left: 182px; top: 7px; }

.main-sb { width: 15px; flex: none; margin: 5px 0 0 4px; }
.main-sb .sb-track { display: flex; flex-direction: column; }
.t-main { flex: 1; margin: 108px 0 1px; }

/* canvas */
.work { flex: 1; min-width: 0; border-left: 1px solid #dcdcdc; margin-left: 2px; display: flex; flex-direction: column; }
.toolbar { height: 28px; display: flex; align-items: center; }
.w18 { width: 18px; }
.w20 { width: 20px; }
.ml2 { margin-left: 2px; }
.ml3 { margin-left: 3px; }
.ml4 { margin-left: 4px; }
.ml5 { margin-left: 5px; }
.ml7 { margin-left: 7px; }
.ml8 { margin-left: 8px; }
.ml10 { margin-left: 10px; }
.tb-check { width: 19px; height: 19px; background: #fff; border: 1px solid #e0e0e0; border-radius: 2px; }
.tb-label { margin-left: 3px; }
.off-text { color: #c0c0c0; }
.on-text { margin-left: 9px; color: #222; }
.tb-sel { height: 18px; }
.tb-sel.off { border-color: #e0e0e0; }
.s54 { width: 54px; }
.s73 { width: 73px; }
.s44 { width: 44px; }
.val { padding-left: 3px; font-family: "Liberation Sans", sans-serif; font-size: 11px; }
.slash { width: 19px; height: 19px; border: 1px solid #ececec; border-radius: 2px; display: flex; align-items: center; justify-content: center; }
.canvas { flex: 1; background: #bebebe; border: 2px solid #dcdcdc; border-right-color: #d4d4d4; margin-right: 4px; }

/* status */
.statusbar { position: relative; height: 25px; margin: 0 4px; background: #f8f8f8; display: flex; align-items: center; padding: 0 0 3px 1028px; }
.st-label { width: 64px; white-space: nowrap; }
.st-label.second { margin-left: 9px; }
.meter { position: relative; width: 123px; height: 18px; background: #f8f8f8; border: 1px solid #c4c4c4; border-radius: 2px; overflow: hidden; font-family: "Liberation Mono", monospace; font-size: 10.500px; line-height: 16px; }
.meter i { position: absolute; left: 1px; top: 1px; bottom: 1px; }
.meter span { position: relative; padding-left: 4px; }
.mem { width: 6px; background: #3fdc9b; }
.disk { width: 106px; background: #3cb8f0; }
.resize { position: absolute; right: 0; bottom: 2px; width: 10px; height: 10px; background: repeating-conic-gradient(#999 0 25%, transparent 0 50%) 0 0 / 4px 4px; }

/* dialog */
.dialog { position: absolute; left: 494px; top: 240px; width: 453px; height: 282px; background: #333; padding: 0 4px 4px; }
.dlg-title { height: 24px; display: flex; align-items: center; color: #fff; font-weight: bold; padding-left: 2px; }
.dlg-close { position: absolute; right: 6px; top: 4px; width: 16px; height: 16px; background: #b8003c; color: #fff; display: flex; align-items: center; justify-content: center; }
.dlg-body { height: 254px; background: #f8f8f8; padding-top: 14px; position: relative; }
.d-row { display: flex; align-items: center; height: 21px; margin-bottom: 6px; }
.d-row label, .d-info label { width: 75px; text-align: right; white-space: nowrap; }
.d-row u, .d-info u { width: 20px; text-align: center; padding-right: 2px; color: #444; }
.d-input { height: 21px; padding-left: 3px; font-size: 12px; display: flex; align-items: center; }
.d-input b, .d-info b { font-family: "Liberation Mono", monospace; font-size: 10.500px; color: #222; white-space: pre; }
.full { width: 335px; }
.preset { width: 285px; }
.d-tool { width: 21px; height: 21px; background: #8e8e8e; border: 1px solid #777; border-radius: 2px; display: flex; align-items: center; justify-content: center; margin-left: 4px; }
.w124 { width: 124px; }
.focus { border-color: #5a96e0; }
.d-input .selected { background: #c8c8c8; border-right: 1px solid #222; line-height: 14px; }
.d-pair { display: flex; align-items: center; height: 45px; margin-bottom: 6px; }
.d-col .d-row { margin-bottom: 3px; }
.d-col .d-row:last-child { margin-bottom: 0; }
.d-col { display: flex; flex-direction: column; }
.unit { width: 104px; margin-left: 4px; }
.d-color { width: 34px; height: 21px; margin-left: 4px; padding: 1px; }
.d-color i { display: block; height: 100%; background: #888; }
.d-info { margin-top: 8px; line-height: 15px; }
.d-info div { display: flex; align-items: center; height: 15px; }
.d-foot { position: absolute; left: 0; right: 0; bottom: 0; height: 34px; border-top: 1px solid #d8d8d8; display: flex; justify-content: flex-end; gap: 8px; padding: 6px 6px 0 0; }
.d-btn { width: 80px; height: 21px; background: #8e8e8e; border: 1px solid #7a7a7a; border-radius: 2px; color: #fff; text-align: center; line-height: 19px; font-weight: bold; }
.d-btn b { font-family: "Liberation Mono", monospace; font-weight: bold; font-size: 12px; }

/* overlays */
.anno { position: absolute; left: 706px; top: 510px; filter: drop-shadow(2px 1px 1px rgba(0, 0, 0, .45)); }
.wm { position: absolute; left: 1283px; top: 708px; display: flex; width: 157px; height: 51px; }
.wm svg { flex: none; margin-right: -18px; }
.wm-cn { font-size: 20px; line-height: 24px; font-weight: bold; color: #2f7fc1; white-space: nowrap; letter-spacing: .5px; opacity: .75; }
.wm-en { font-family: "Liberation Sans", sans-serif; font-size: 16.500px; line-height: 22px; color: #1f9f9a; white-space: nowrap; opacity: .9; }
.wm-en span { color: #4fc07a; }
```
